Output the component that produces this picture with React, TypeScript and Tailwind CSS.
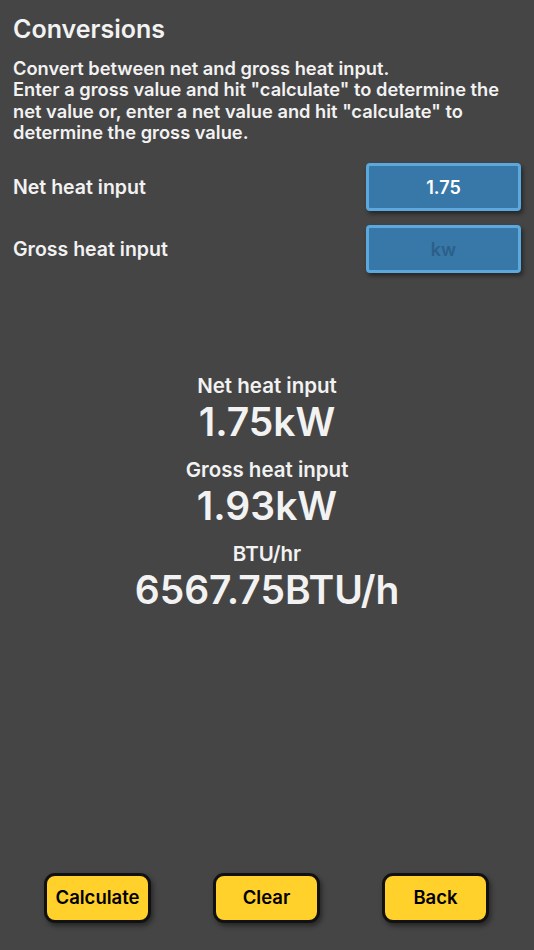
import React, { useState } from 'react';

function App() {
  const [net, setNet] = useState('1.75');
  const [gross, setGross] = useState('');

  return (
    <div
      className="h-[950px] w-full bg-[#454545] text-[#f2f2f2] flex flex-col"
      style={{ fontFamily: 'Inter, "Noto Sans", sans-serif' }}
    >
      {/* Header */}
      <div className="px-[13px] pt-[13px]">
        <h1 className="text-[25px] leading-[33px] font-semibold">Conversions</h1>
        <p className="mt-[12px] text-[18.3px] leading-[21.3px] font-semibold">
          Convert between net and gross heat input.
          <br />
          Enter a gross value and hit "calculate" to determine the net value or, enter a net value and hit "calculate" to
          determine the gross value.
        </p>
      </div>

      {/* Inputs */}
      <div className="mt-[20px] pl-[13px] pr-[13px] flex flex-col gap-[14px]">
        <div className="flex items-center justify-between">
          <span className="text-[19.5px] font-semibold">Net heat input</span>
          <input
            value={net}
            onChange={e => setNet(e.target.value)}
            className="w-[155px] h-[48px] rounded-[4px] bg-[#3878a8] border-[3px] border-[#5aa8de] text-center text-[18px] font-semibold text-white shadow-[2px_3px_4px_rgba(0,0,0,0.45)] outline-none"
          />
        </div>
        <div className="flex items-center justify-between">
          <span className="text-[19.5px] font-semibold">Gross heat input</span>
          <input
            value={gross}
            placeholder="kw"
            onChange={e => setGross(e.target.value)}
            className="w-[155px] h-[48px] rounded-[4px] bg-[#3878a8] border-[3px] border-[#5aa8de] text-center text-[18px] font-semibold text-white placeholder:text-[#2c5f88] shadow-[2px_3px_4px_rgba(0,0,0,0.45)] outline-none"
          />
        </div>
      </div>

      {/* Results */}
      <div className="mt-[100px] flex flex-col items-center font-semibold">
        <div className="text-[20.5px] leading-[26px]">Net heat input</div>
        <div className="text-[39px] leading-[46px]">1.75kW</div>
        <div className="mt-[12px] text-[20.5px] leading-[26px]">Gross heat input</div>
        <div className="text-[39px] leading-[46px]">1.93kW</div>
        <div className="mt-[12px] text-[20.5px] leading-[26px]">BTU/hr</div>
        <div className="text-[39px] leading-[46px]">6567.75BTU/h</div>
      </div>

      <div className="flex-1" />

      {/* Buttons */}
      <div className="pb-[27px] pl-[44px] pr-[45px] flex justify-between">
        {['Calculate', 'Clear', 'Back'].map(label => (
          <button
            key={label}
            className="w-[107px] h-[50px] rounded-[11px] bg-[#ffd12a] border-[3px] border-[#111] text-black text-[18.5px] font-semibold shadow-[2px_3px_5px_rgba(0,0,0,0.45)]"
          >
            {label}
          </button>
        ))}
      </div>
    </div>
  );
}

export default App;
